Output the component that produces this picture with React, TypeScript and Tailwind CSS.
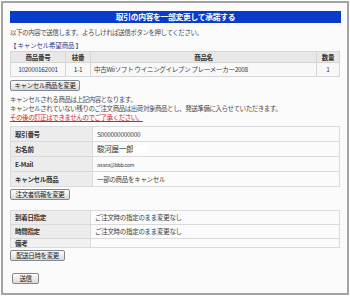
const jp = '[font-family:"Noto_Sans_CJK_JP","Noto_Sans",sans-serif]';

function Btn({ children, className = '' }: { children: React.ReactNode; className?: string }) {
  return (
    <button
      className={`block h-[11px] px-[2px] border border-[#7f8794] rounded-[2px] bg-gradient-to-b from-[#fdfdfd] to-[#dadada] text-[6.5px] leading-[9px] tracking-[-0.4px] text-[#222] ${className}`}
    >
      {children}
    </button>
  );
}

const cancelItems = [
  { code: '102000162001', branch: '1-1', name: '中古Wiiソフト ウイニングイレブン プレーメーカー2008', qty: '1' },
];

export default function App() {
  return (
    <div className={`w-[350px] h-[297px] bg-white pt-[1px] pl-[1px] ${jp}`}>
      <div className="w-[348px] h-[294px] border-2 border-[#a4a4a4] bg-[#fbfbfb] pt-[8px] pl-[7px] pr-[6px] text-[#3c3c3c]">
        {/* title bar */}
        <div className="h-[12px] bg-[#0a3ccb] flex items-center justify-center text-white font-bold text-[7.8px] tracking-[-0.3px] leading-none">
          取引の内容を一部変更して承諾する
        </div>

        <p className="mt-[5px] text-[6.5px] leading-[9px] tracking-[-0.45px] text-[#4a4a4a]">
          以下の内容で送信します。よろしければ送信ボタンを押してください。
        </p>

        <p className="mt-[4px] mb-[1px] text-[6.5px] leading-[9px] tracking-[-0.2px] text-[#2b3d8c]">【 キャンセル希望商品 】</p>

        {/* cancel items */}
        <table className="w-[330px] border-collapse text-[6.5px] tracking-[-0.3px]">
          <thead>
            <tr className="h-[11px] bg-[#e8e8e8] text-[#333] font-bold">
              <th className="w-[55px] border border-[#d6d6d6] leading-none">商品番号</th>
              <th className="w-[25px] border border-[#d6d6d6] leading-none">枝番</th>
              <th className="border border-[#d6d6d6] leading-none">商品名</th>
              <th className="w-[23px] border border-[#d6d6d6] leading-none">数量</th>
            </tr>
          </thead>
          <tbody>
            {cancelItems.map((it) => (
              <tr key={it.code} className="h-[14px] bg-[#f8f8f8]">
                <td className="border border-[#d6d6d6] text-center leading-none">{it.code}</td>
                <td className="border border-[#d6d6d6] text-center leading-none">{it.branch}</td>
                <td className="border border-[#d6d6d6] pl-[3px] leading-none">{it.name}</td>
                <td className="border border-[#d6d6d6] text-center leading-none">{it.qty}</td>
              </tr>
            ))}
          </tbody>
        </table>
        <Btn className="mt-[3px] w-[70px]">キャンセル商品を変更</Btn>

        <div className="mt-[4px] text-[6.5px] leading-[9px] tracking-[-0.45px] text-[#4a4a4a]">
          <p>キャンセルされる商品は上記内容となります。</p>
          <p>キャンセルされていない残りのご注文商品は出荷対象商品とし、発送準備に入らせていただきます。</p>
          <p className="text-[#d4202a] underline decoration-[#d4202a] underline-offset-[1px]">
            その後の訂正はできませんのでご了承ください。
          </p>
        </div>

        {/* customer info */}
        <table className="mt-[4px] w-[330px] border-collapse text-[6.5px] tracking-[-0.3px]">
          <tbody>
            {[
              ['取引番号', 'S000000000000'],
              ['お名前', 'name'],
              ['E-Mail', 'aaaaa@bbb.com'],
              ['キャンセル商品', '一部の商品をキャンセル'],
            ].map(([k, v]) => (
              <tr key={k} className="h-[15px]">
                <th className="w-[82px] border border-[#dadada] bg-[#ececec] text-left pl-[4px] font-bold text-[#333] leading-none">
                  {k}
                </th>
                <td className="border border-[#dadada] bg-[#fbfbfb] pl-[4px] leading-none">
                  {v === 'name' ? (
                    <span className="flex items-center">
                      <span className="text-[7.6px] tracking-[-0.3px] text-[#333]">駿河屋一郎</span>
                      <span className="inline-block w-[15px] h-[8px] bg-white" />
                    </span>
                  ) : v === 'aaaaa@bbb.com' ? (
                    <span className="text-[5.2px]">{v}</span>
                  ) : (
                    v
                  )}
                </td>
              </tr>
            ))}
          </tbody>
        </table>
        <Btn className="mt-[2px] w-[60px]">注文者情報を変更</Btn>

        {/* delivery */}
        <table className="mt-[10px] w-[330px] border-collapse text-[6.5px] tracking-[-0.3px]">
          <tbody>
            <tr className="h-[14px]">
              <th className="w-[80px] border border-[#dadada] bg-[#ececec] text-left pl-[4px] font-bold text-[#333] leading-none">到着日指定</th>
              <td className="border border-[#dadada] bg-[#fbfbfb] pl-[4px] leading-none">ご注文時の指定のまま変更なし</td>
            </tr>
            <tr className="h-[14px]">
              <th className="border border-[#dadada] bg-[#ececec] text-left pl-[4px] font-bold text-[#333] leading-none">時間指定</th>
              <td className="border border-[#dadada] bg-[#fbfbfb] pl-[4px] leading-none">ご注文時の指定のまま変更なし</td>
            </tr>
            <tr className="h-[9px]">
              <th className="border border-[#dadada] bg-[#f1f1f1] text-left pl-[4px] font-bold text-[#333] leading-none">備考</th>
              <td className="border border-[#dadada] bg-[#fbfbfb]" />
            </tr>
          </tbody>
        </table>
        <Btn className="mt-[2px] w-[55px]">配送日時を変更</Btn>

        <Btn className="mt-[12px] ml-[2px] w-[27px] h-[10px]">送信</Btn>
      </div>
    </div>
  );
}
